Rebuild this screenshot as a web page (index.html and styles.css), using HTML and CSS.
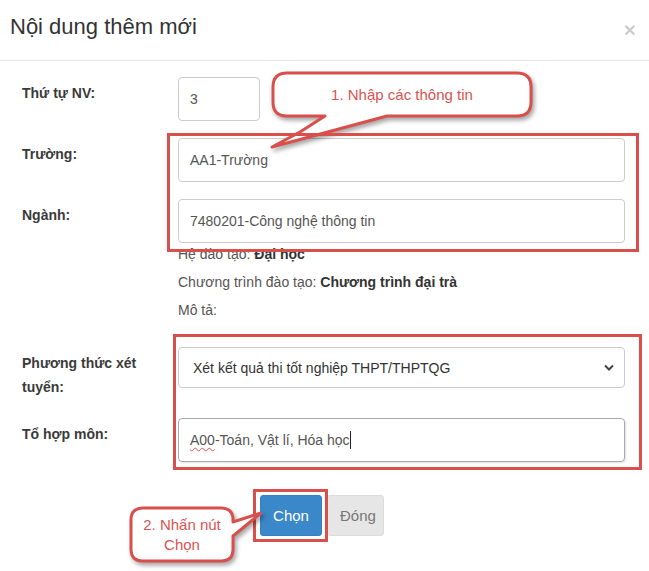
FILE: index.html
```html
<!DOCTYPE html>
<html lang="vi">
<head>
<meta charset="utf-8">
<title>Nội dung thêm mới</title>
<link rel="stylesheet" href="styles.css">
</head>
<body>
<div class="modal">
  <div class="modal-header">
    <h4 class="title">Nội dung thêm mới</h4>
    <span class="close">×</span>
  </div>
  <div class="modal-body">
    <div class="form-row">
      <div class="label">Thứ tự NV:</div>
      <div class="field"><div class="control short">3</div></div>
    </div>
    <div class="form-row">
      <div class="label">Trường:</div>
      <div class="field"><div class="control">AA1-Trường</div></div>
    </div>
    <div class="form-row row-info">
      <div class="label">Ngành:</div>
      <div class="field">
        <div class="control">7480201-Công nghệ thông tin</div>
        <div class="info">
          <p>Hệ đào tạo: <b>Đại học</b></p>
          <p>Chương trình đào tạo: <b>Chương trình đại trà</b></p>
          <p>Mô tả:</p>
        </div>
      </div>
    </div>
    <div class="form-row row-select">
      <div class="label">Phương thức xét tuyển:</div>
      <div class="field">
        <div class="control select">
          <span>Xét kết quả thi tốt nghiệp THPT/THPTQG</span>
          <svg class="chevron" width="10" height="7" viewBox="0 0 10 7"><polyline points="1,1.5 5,5.5 9,1.5" fill="none" stroke="#444" stroke-width="2"/></svg>
        </div>
      </div>
    </div>
    <div class="form-row row-last">
      <div class="label">Tổ hợp môn:</div>
      <div class="field"><div class="control focus"><span class="typo">A00</span>-Toán, Vật lí, Hóa học<span class="caret"></span></div></div>
    </div>
  </div>
  <div class="modal-footer">
    <button class="btn btn-primary">Chọn</button>
    <button class="btn btn-default">Đóng</button>
  </div>

  <div class="callout callout-1">
    <svg class="bubble" width="280" height="90" viewBox="0 0 280 90">
      <path d="M25,7 H255 Q269,7 269,21 V36 Q269,50 255,50 H125 L10,81 L38,66 L63,50 H25 Q11,50 11,36 V21 Q11,7 25,7 Z"/>
    </svg>
  </div>
  <div class="hl hl-1"></div>
  <div class="hl hl-2"></div>
  <div class="hl hl-3"></div>
  <div class="callout callout-2">
    <svg class="bubble" width="145" height="68" viewBox="0 0 145 68">
      <path d="M19,6 H97 Q109,6 109,18 V20 L137,11 L109,34 V47 Q109,59 97,59 H19 Q7,59 7,47 V18 Q7,6 19,6 Z"/>
    </svg>
  </div>
  <div class="callout-text text-1">1. Nhập các thông tin</div>
  <div class="callout-text text-2">2. Nhấn nút<br>Chọn</div>
</div>
</body>
</html>
```

FILE: styles.css
```css
* { box-sizing: border-box; }
html, body { margin: 0; background: #fff; }
body {
  font-family: "Liberation Sans", Arial, sans-serif;
  font-size: 14px;
  color: #333;
}
.modal {
  position: relative;
  width: 649px;
  height: 571px;
  overflow: hidden;
  background: #fff;
}
.modal-header {
  height: 61px;
  border-bottom: 1px solid #e5e5e5;
  display: flex;
  justify-content: space-between;
  align-items: flex-start;
  padding: 14px 13px 0 10px;
}
.title {
  margin: 0;
  font-size: 22px;
  font-weight: normal;
  line-height: 26px;
  color: #333;
}
.close {
  font-size: 21px;
  font-weight: bold;
  line-height: 21px;
  color: #000;
  opacity: 0.2;
  margin-top: 5px;
}
.modal-body {
  padding: 16px 24px 0 22px;
}
.form-row {
  display: grid;
  grid-template-columns: 156px 1fr;
  margin-bottom: 17px;
}
.form-row.row-info { margin-bottom: 19px; }
.form-row.row-select { margin-bottom: 19px; }
.form-row.row-last { margin-bottom: 0; }
.label {
  font-weight: bold;
  line-height: 24px;
  padding-top: 4px;
  padding-right: 15px;
  color: #3a3a3a;
}
.control {
  height: 44px;
  border: 1px solid #ccc;
  border-radius: 4px;
  padding: 0 11px;
  display: flex;
  align-items: center;
  color: #555;
  font-size: 14px;
  white-space: nowrap;
}
.control.short { width: 82px; }
.control.select {
  height: 41px;
  padding: 0 10px 0 14px;
  justify-content: space-between;
  color: #333;
}
.control.focus {
  border-color: #a8a8a8;
  box-shadow: 1px 1px 2px rgba(0, 0, 0, 0.12);
  color: #555;
}
.typo {
  text-decoration: underline wavy #e05050;
  text-decoration-thickness: 1px;
  text-underline-offset: 2px;
}
.caret {
  display: inline-block;
  width: 0;
  height: 18px;
  border-left: 1px solid #222;
}
.info { margin-top: 1px; color: #555; }
.info p { margin: 0 0 8px; line-height: 20px; }
.info b { color: #333; }
.modal-footer {
  display: flex;
  justify-content: center;
  gap: 5px;
  padding: 33px 5px 0 0;
}
.btn {
  font-family: "Liberation Sans", Arial, sans-serif;
  font-size: 15px;
  height: 41px;
  padding: 0 12px;
  border-radius: 3px;
  border: 1px solid transparent;
}
.btn-primary {
  width: 62px;
  background: #3a87c9;
  border-color: #3580c0;
  color: #fff;
}
.btn-default {
  width: 57px;
  background: #e6e6e6;
  border-color: #dcdcdc;
  color: #777;
}
.hl {
  position: absolute;
  border: 3px solid #d94f4c;
}
.hl-1 { left: 167px; top: 133px; width: 472px; height: 119px; }
.hl-2 { left: 173px; top: 334px; width: 469px; height: 136px; }
.hl-3 { left: 253px; top: 489px; width: 75px; height: 53px; }
.callout { position: absolute; }
.callout-1 { left: 262px; top: 66px; }
.callout-2 { left: 124px; top: 502px; }
.bubble {
  display: block;
  overflow: visible;
  filter: drop-shadow(2px 3px 2px rgba(0, 0, 0, 0.35));
}
.bubble path {
  fill: #fff;
  stroke: #d94f4c;
  stroke-width: 3;
  stroke-linejoin: round;
}
.callout-text {
  position: absolute;
  display: flex;
  align-items: center;
  justify-content: center;
  text-align: center;
  color: #d9534f;
  font-size: 15px;
  line-height: 20px;
}
.text-1 { left: 273px; top: 73px; width: 258px; height: 43px; }
.text-2 { left: 131px; top: 508px; width: 102px; height: 53px; }
```
